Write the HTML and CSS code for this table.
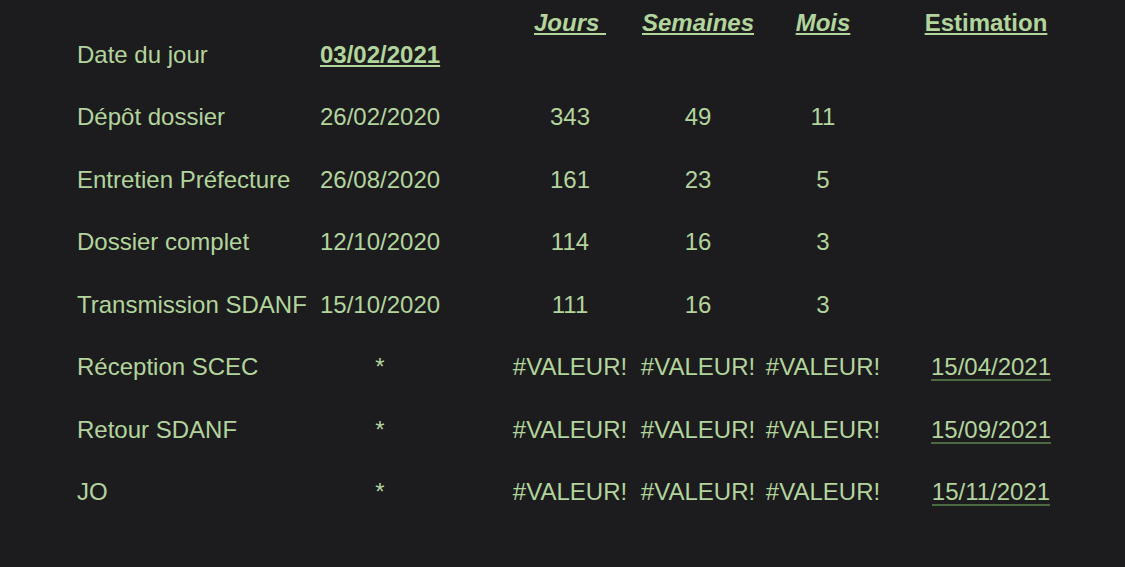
FILE: index.html
```html
<!DOCTYPE html>
<html lang="fr">
<head>
<meta charset="utf-8">
<title>Suivi naturalisation</title>
<link rel="stylesheet" href="styles.css">
</head>
<body>
<main class="sheet">
  <div class="row head">
    <span></span>
    <span></span>
    <span class="c3 hd-i">Jours&nbsp;</span>
    <span class="c hd-i">Semaines</span>
    <span class="c hd-i">Mois</span>
    <span class="c hd">Estimation</span>
  </div>
  <div class="rows">
    <div class="row">
      <span>Date du jour</span>
      <span class="c today">03/02/2021</span>
      <span class="c3"></span><span></span><span></span><span></span>
    </div>
    <div class="row">
      <span>Dépôt dossier</span>
      <span class="c">26/02/2020</span>
      <span class="c3">343</span><span class="c">49</span><span class="c">11</span><span></span>
    </div>
    <div class="row">
      <span>Entretien Préfecture</span>
      <span class="c">26/08/2020</span>
      <span class="c3">161</span><span class="c">23</span><span class="c">5</span><span></span>
    </div>
    <div class="row">
      <span>Dossier complet</span>
      <span class="c">12/10/2020</span>
      <span class="c3">114</span><span class="c">16</span><span class="c">3</span><span></span>
    </div>
    <div class="row">
      <span>Transmission SDANF</span>
      <span class="c">15/10/2020</span>
      <span class="c3">111</span><span class="c">16</span><span class="c">3</span><span></span>
    </div>
    <div class="row">
      <span>Réception SCEC</span>
      <span class="c">*</span>
      <span class="c3">#VALEUR!</span><span class="c">#VALEUR!</span><span class="c">#VALEUR!</span>
      <span class="est"><span class="est-date">15/04/2021</span></span>
    </div>
    <div class="row">
      <span>Retour SDANF</span>
      <span class="c">*</span>
      <span class="c3">#VALEUR!</span><span class="c">#VALEUR!</span><span class="c">#VALEUR!</span>
      <span class="est"><span class="est-date">15/09/2021</span></span>
    </div>
    <div class="row">
      <span>JO</span>
      <span class="c">*</span>
      <span class="c3">#VALEUR!</span><span class="c">#VALEUR!</span><span class="c">#VALEUR!</span>
      <span class="est"><span class="est-date">15/11/2021</span></span>
    </div>
  </div>
</main>
</body>
</html>
```

FILE: styles.css
```css
html, body {
  margin: 0;
  padding: 0;
  background: #1c1c1e;
}
body {
  width: 1125px;
  height: 567px;
  overflow: hidden;
  color: #b1d59b;
  font-family: "Liberation Sans", Arial, sans-serif;
  font-size: 24px;
}
.sheet {
  padding: 9px 0 0 77px;
}
.row {
  display: grid;
  grid-template-columns: 243px 120px 195px 126px 124px 202px;
  line-height: 28px;
  white-space: nowrap;
}
.head {
  margin-bottom: 3.5px;
}
.rows {
  display: flex;
  flex-direction: column;
  gap: 34.5px;
}
.c {
  text-align: center;
}
.c3 {
  text-align: center;
  padding-left: 65px;
}
.hd, .hd-i {
  font-weight: bold;
  text-decoration: underline;
  text-underline-offset: 2px;
  text-decoration-thickness: 2px;
}
.hd-i {
  font-style: italic;
}
.today {
  font-weight: bold;
  text-decoration: underline;
  text-underline-offset: 2px;
  text-decoration-thickness: 2px;
}
.est {
  text-align: center;
  padding-left: 10px;
}
.est-date {
  display: inline-block;
  line-height: 24px;
  border-bottom: 2px solid #4c6a42;
}
```
